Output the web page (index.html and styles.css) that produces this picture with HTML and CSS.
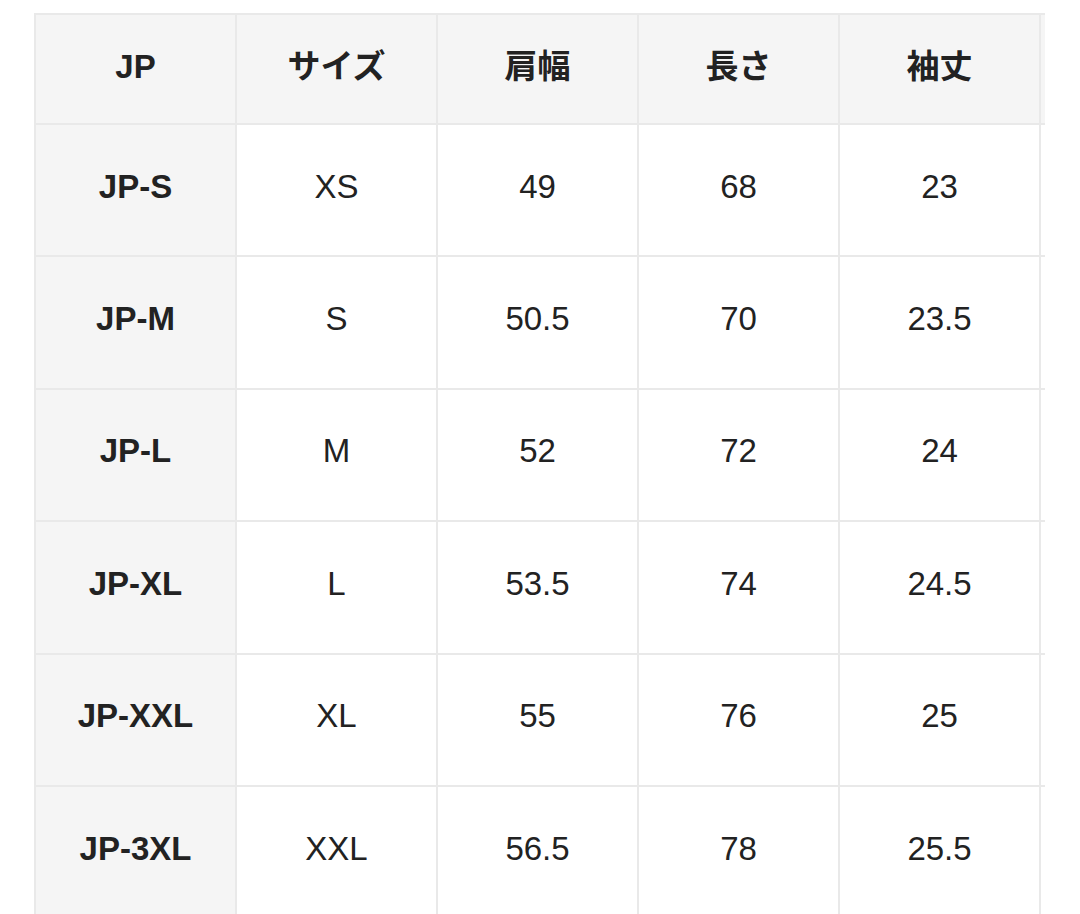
FILE: index.html
```html
<!DOCTYPE html>
<html lang="ja">
<head>
<meta charset="utf-8">
<link rel="stylesheet" href="styles.css">
</head>
<body>
<div class="wrap">
<table class="size-table">
<thead>
<tr><th>JP</th><th>サイズ</th><th>肩幅</th><th>長さ</th><th>袖丈</th><th class="extra"></th></tr>
</thead>
<tbody>
<tr><th>JP-S</th><td>XS</td><td>49</td><td>68</td><td>23</td><td class="extra"></td></tr>
<tr><th>JP-M</th><td>S</td><td>50.5</td><td>70</td><td>23.5</td><td class="extra"></td></tr>
<tr><th>JP-L</th><td>M</td><td>52</td><td>72</td><td>24</td><td class="extra"></td></tr>
<tr><th>JP-XL</th><td>L</td><td>53.5</td><td>74</td><td>24.5</td><td class="extra"></td></tr>
<tr><th>JP-XXL</th><td>XL</td><td>55</td><td>76</td><td>25</td><td class="extra"></td></tr>
<tr><th>JP-3XL</th><td>XXL</td><td>56.5</td><td>78</td><td>25.5</td><td class="extra"></td></tr>
</tbody>
</table>
</div>
</body>
</html>
```
FILE: styles.css
```css
html, body {
  margin: 0;
  padding: 0;
  background: #ffffff;
}
body {
  font-family: "Liberation Sans", Arial, "Noto Sans CJK JP", sans-serif;
  color: #222222;
  overflow: hidden;
  height: 914px;
}
.wrap {
  margin-left: 34px;
  margin-top: 13px;
  width: 1011px;
  overflow: hidden;
}
.size-table {
  border-collapse: collapse;
  table-layout: fixed;
  width: 1206px;
}
.size-table th,
.size-table td {
  width: 199px;
  border: 2px solid #e9e9e9;
  text-align: center;
  vertical-align: middle;
  font-size: 33px;
  line-height: 36px;
  padding: 0 0 7px 0;
}
.size-table th {
  background: #f5f5f5;
  font-weight: bold;
}
.size-table td {
  background: #ffffff;
  font-weight: normal;
}
.size-table thead th {
  height: 104px;
  padding: 0 0 4px 0;
}
.size-table tbody tr {
  height: 132.4px;
}
.size-table .extra {
  background: #f5f5f5;
}
.size-table tbody .extra {
  background: #ffffff;
}
```
